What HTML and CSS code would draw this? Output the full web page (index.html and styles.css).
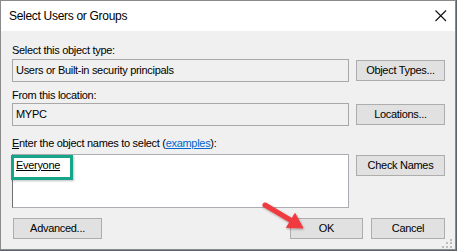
FILE: index.html
```html
<!DOCTYPE html>
<html>
<head>
<meta charset="utf-8">
<link rel="stylesheet" href="styles.css">
</head>
<body>
<div class="window">
  <div class="titlebar">
    <span class="title">Select Users or Groups</span>
    <svg class="close" width="12" height="12" viewBox="0 0 12 12"><path d="M0.5 0.5 L11 11 M11 0.5 L0.5 11" stroke="#111" stroke-width="1.1" fill="none"/></svg>
  </div>
  <div class="content">
    <div class="label lab1">Select this object type:</div>
    <div class="row">
      <div class="field">Users or Built-in security principals</div>
      <div class="btn">Object Types...</div>
    </div>
    <div class="label lab2">From this location:</div>
    <div class="row">
      <div class="field">MYPC</div>
      <div class="btn">Locations...</div>
    </div>
    <div class="label lab3"><u>E</u>nter the object names to select (<a class="link">examples</a>):</div>
    <div class="row top">
      <div class="names"><u>Everyone</u><span class="highlight"></span></div>
      <div class="btn">Check Names</div>
    </div>
    <div class="bottom">
      <div class="btn adv">Advanced...</div>
      <div class="spacer"></div>
      <div class="btn ok">OK</div>
      <div class="btn cancel">Cancel</div>
    </div>
  </div>
  <svg class="arrow" width="50" height="36" viewBox="258 198 50 36">
    <defs><filter id="sh" x="-20%" y="-20%" width="140%" height="140%"><feDropShadow dx="0.5" dy="1" stdDeviation="0.8" flood-color="#000" flood-opacity="0.35"/></filter></defs>
    <g filter="url(#sh)" fill="#ef3b40" stroke="#ef3b40">
      <line x1="265" y1="205" x2="292" y2="221" stroke-width="5" stroke-linecap="round"/>
      <polygon points="303,228 286.5,227.5 295,213.5" stroke-width="1" stroke-linejoin="round"/>
    </g>
  </svg>
  <svg class="grip" width="8" height="9" viewBox="0 0 8 9">
    <rect x="5" y="0" width="2" height="2" fill="#bdbdbd"/>
    <rect x="1" y="3" width="2" height="2" fill="#bdbdbd"/>
    <rect x="5" y="3" width="2" height="2" fill="#bdbdbd"/>
    <rect x="-3" y="7" width="2" height="2" fill="#bdbdbd"/>
    <rect x="1" y="7" width="2" height="2" fill="#bdbdbd"/>
    <rect x="5" y="7" width="2" height="2" fill="#bdbdbd"/>
  </svg>
</div>
</body>
</html>
```
FILE: styles.css
```css
html, body {
  margin: 0;
  padding: 0;
  background: #5a6470;
}
body {
  width: 457px;
  height: 251px;
  overflow: hidden;
  font-family: "Liberation Sans", Arial, sans-serif;
  font-size: 11px;
  letter-spacing: -0.3px;
  color: #000;
}
.window {
  position: relative;
  width: 454px;
  height: 248px;
  border: 1px solid #8a8a8a;
  background: #f0f0f0;
  display: flex;
  flex-direction: column;
}
.titlebar {
  height: 30px;
  background: #fff;
  display: flex;
  align-items: center;
  padding-left: 8px;
  padding-right: 8px;
}
.title {
  flex: 1;
  font-size: 12px;
  padding-bottom: 1px;
}
.close {
  display: block;
}
.content {
  flex: 1;
  padding: 11px 10px 0 11px;
  display: flex;
  flex-direction: column;
}
.label {
  height: 16px;
  line-height: 16px;
  white-space: nowrap;
}
.lab1 { margin-bottom: 1px; }
.lab2 { margin-top: 5px; }
.lab3 { margin-top: 9px; margin-bottom: 3px; }
.row {
  display: flex;
  align-items: center;
  gap: 7px;
}
.row.top { align-items: flex-start; }
.field {
  width: 332px;
  height: 21px;
  border: 1px solid #a8a8a8;
  background: #f0f0f0;
  padding-left: 3px;
  line-height: 21px;
  white-space: nowrap;
}
.btn {
  box-sizing: border-box;
  width: 89px;
  height: 21px;
  border: 1px solid #adadad;
  background: #e1e1e1;
  text-align: center;
  line-height: 19px;
  white-space: nowrap;
}
.row.top .btn { margin-top: 1px; }
.names {
  position: relative;
  box-sizing: border-box;
  width: 337px;
  height: 54px;
  background: #fff;
  border: 1px solid #abadb3;
  border-left-color: #6f6f6f;
  padding: 3px 0 0 3px;
  line-height: 15px;
}
.highlight {
  position: absolute;
  left: -2px;
  top: 0px;
  width: 56px;
  height: 19px;
  border: 3px solid #17a589;
  box-shadow: 1px 1px 2px rgba(0,0,0,0.25);
}
.link {
  color: #0066cc;
  text-decoration: underline;
}
.bottom {
  display: flex;
  margin-top: 10px;
  gap: 8px;
}
.btn.adv { margin-left: 1px; }
.spacer { flex: 1; }
.btn.ok { width: 73px; }
.btn.cancel { width: 74px; }
.arrow {
  position: absolute;
  left: 257px;
  top: 197px;
}
.grip {
  position: absolute;
  right: 2px;
  bottom: 1px;
  overflow: visible;
}
```
